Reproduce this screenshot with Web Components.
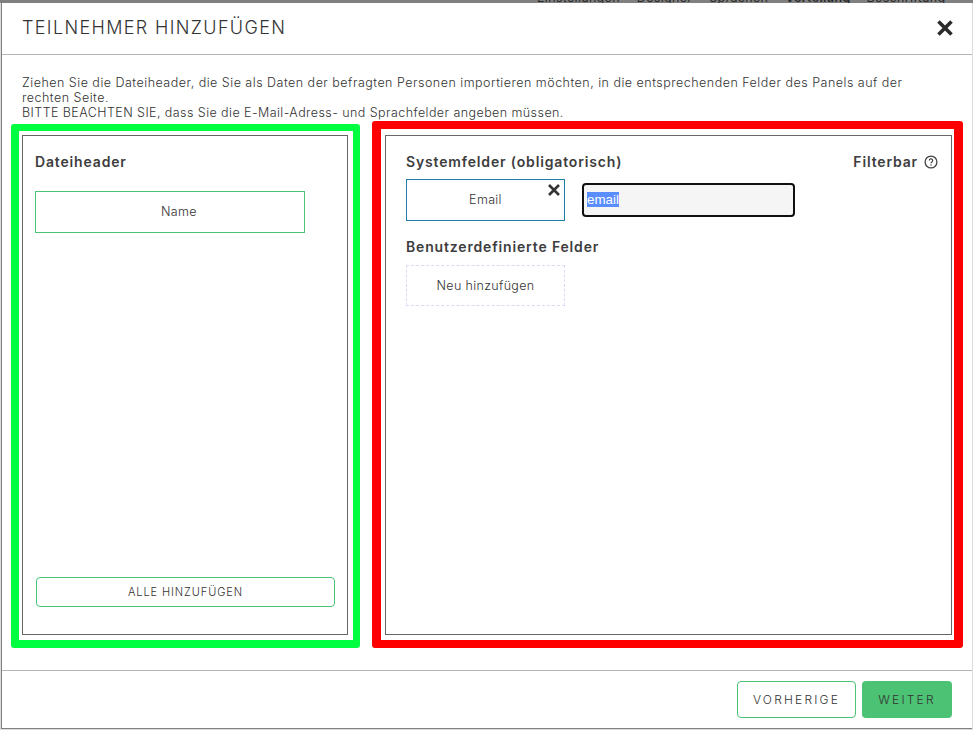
<!DOCTYPE html>
<html lang="de">
<head>
<meta charset="utf-8">
<title>Teilnehmer hinzufügen</title>
<style>
  html, body { margin: 0; height: 100%; }
  body { background: #dcdcdc; font-family: "Inter", "Liberation Sans", sans-serif; color: #3d3d3d; overflow: hidden; }
</style>
</head>
<body>
<template id="backdrop-strip-tpl">
  <style>
    :host { display: block; height: 3px; overflow: hidden; background: #808080; }
    nav { display: flex; margin-top: -10px; padding-left: 537px; font-size: 12.5px; line-height: 15px; letter-spacing: .3px; color: #2a2a2a; white-space: nowrap; }
    span { margin-right: 17px; }
    b { font-weight: 600; margin-right: 16px; }
  </style>
  <nav><span>Einstellungen</span><span>Designer</span><span>Sprachen</span><b>Verteilung</b><span>Beschriftung</span></nav>
</template>
<template id="field-tile-tpl">
  <style>
    :host { display: flex; position: relative; box-sizing: border-box; width: 159px; height: 42px; padding-bottom: 2px; align-items: center; justify-content: center; font-size: 12.5px; font-weight: 300; letter-spacing: .35px; color: #333; border: 1px solid #1f7aa8; }
    :host([variant="source"]) { width: 270px; border-color: #4cc274; padding-left: 18px; }
    :host([variant="add"]) { height: 41px; padding-bottom: 0; border: 1px dashed #ddd8f5; }
    button { position: absolute; top: 3px; right: 3px; width: 14px; height: 14px; padding: 0; border: 0; background: none; }
    svg { display: block; }
  </style>
  <slot></slot>
</template>
<template id="panel-box-tpl">
  <style>
    :host { display: flex; box-sizing: border-box; border: solid #00ff40; border-width: 7px 7px 8px 8px; border-radius: 3px; padding: 4px 5px 5px 3px; }
    :host([tone="red"]) { border-color: #ff0000; border-width: 8px 9px; padding: 6px 2px 5px 4px; }
    .inner { flex: 1; min-width: 0; box-sizing: border-box; border: 1px solid #666; display: flex; flex-direction: column; }
  </style>
  <div class="inner"><slot></slot></div>
</template>
<template id="import-dialog-tpl">
  <style>
    :host { display: flex; flex-direction: column; box-sizing: border-box; height: 726px; margin: 0 1px 0 1px; background: #fff; border: solid #808080; border-width: 0 0 1px 1px; }
    header { height: 52px; flex: none; box-sizing: border-box; border-bottom: 1px solid #b5b5b5; display: flex; align-items: center; justify-content: space-between; padding: 0 18px 2px 20px; }
    h1 { margin: 0; font-size: 18px; font-weight: 300; letter-spacing: 1.35px; color: #333; }
    .body { flex: 1; min-height: 0; display: flex; flex-direction: column; padding: 20px 8px 22px 9px; }
    p { margin: 0 0 0 11px; width: 890px; font-size: 12.5px; font-weight: 300; letter-spacing: .49px; line-height: 15px; color: #333; }
    p span { letter-spacing: .43px; }
    .columns { flex: 1; min-height: 0; display: flex; gap: 12px; align-items: flex-end; }
    panel-box[tone="green"] { width: 349px; height: 524px; }
    panel-box[tone="red"] { width: 591px; height: 527px; }
    .col { flex: 1; display: flex; flex-direction: column; padding: 17px 12px 27px; }
    h2 { margin: 0; font-size: 14px; line-height: 17px; font-weight: 600; color: #3d3d3d; letter-spacing: .84px; }
    .col field-tile { margin-top: 21px; }
    .all { margin-top: auto; height: 30px; border: 1px solid #4cc274; border-radius: 4px; background: #fff; font: inherit; font-weight: 300; font-size: 11px; letter-spacing: .9px; color: #333; margin-left: 1px; }
    .right { flex: 1; padding: 17px 13px 0 20px; }
    .row { display: flex; justify-content: space-between; align-items: center; }
    .filter { display: flex; align-items: center; gap: 6px; }
    .map { display: flex; align-items: center; gap: 17px; margin-top: 9px; }
    .mail { box-sizing: border-box; width: 213px; height: 34px; border: 2px solid #111; border-radius: 4px; background: #f5f5f5; padding: 0 3px 2px; font: 13.33px "Liberation Sans", sans-serif; display: flex; align-items: center; }
    .mail span { background: #5a8dff; color: #fff; }
    h2.sub { margin-top: 17px; margin-bottom: 10px; }
    footer { height: 58px; flex: none; box-sizing: border-box; border-top: 1px solid #b5b5b5; display: flex; justify-content: flex-end; align-items: flex-start; gap: 6px; padding: 10px 20px 0 0; }
    footer button { box-sizing: border-box; height: 37px; border-radius: 4px; font: inherit; font-weight: 300; font-size: 12px; letter-spacing: 2.2px; color: #333; }
    .prev { width: 119px; background: #fff; border: 1px solid #4cc274; }
    .next { width: 90px; background: #4cc274; border: 0; }
  </style>
  <header>
    <h1>TEILNEHMER HINZUFÜGEN</h1>
    <svg width="18" height="18" viewBox="0 0 18 18"><path d="M2.5 2.5 15.5 15.5M15.5 2.5 2.5 15.5" stroke="#2b2b2b" stroke-width="3.6" fill="none"/></svg>
  </header>
  <div class="body">
    <p>Ziehen Sie die Dateiheader, die Sie als Daten der befragten Personen importieren möchten, in die entsprechenden Felder des Panels auf der rechten Seite.<br><span>BITTE BEACHTEN SIE, dass Sie die E-Mail-Adress- und Sprachfelder angeben müssen.</span></p>
    <div class="columns">
      <panel-box tone="green">
        <div class="col">
          <h2>Dateiheader</h2>
          <field-tile variant="source">Name</field-tile>
          <button class="all">ALLE HINZUFÜGEN</button>
        </div>
      </panel-box>
      <panel-box tone="red">
        <div class="right">
          <div class="row">
            <h2>Systemfelder (obligatorisch)</h2>
            <div class="filter"><h2>Filterbar</h2>
              <svg width="14" height="14" viewBox="0 0 14 14" fill="none" stroke="#444"><circle cx="7" cy="7" r="5.9" stroke-width="1.3"/><path d="M5.3 5.6a1.7 1.7 0 1 1 2.5 1.5c-.6.3-.8.6-.8 1.2" stroke-width="1.2"/><circle cx="7" cy="10" r=".75" fill="#444" stroke="none"/></svg>
            </div>
          </div>
          <div class="map">
            <field-tile removable>Email</field-tile>
            <div class="mail"><span>email</span></div>
          </div>
          <h2 class="sub">Benutzerdefinierte Felder</h2>
          <field-tile variant="add">Neu hinzufügen</field-tile>
        </div>
      </panel-box>
    </div>
  </div>
  <footer>
    <button class="prev">VORHERIGE</button>
    <button class="next">WEITER</button>
  </footer>
</template>
<backdrop-strip></backdrop-strip>
<import-dialog></import-dialog>
<script>
class TemplatedElement extends HTMLElement {
  constructor(tplId) {
    super();
    this.root = this.attachShadow({ mode: 'open' });
    this.root.appendChild(document.getElementById(tplId).content.cloneNode(true));
  }
}
class BackdropStrip extends TemplatedElement {
  constructor() { super('backdrop-strip-tpl'); }
}
class FieldTile extends TemplatedElement {
  constructor() { super('field-tile-tpl'); }
  connectedCallback() {
    if (this.hasAttribute('removable') && !this.root.querySelector('button')) {
      const btn = document.createElement('button');
      btn.innerHTML = '<svg width="14" height="14" viewBox="0 0 14 14"><path d="M2 2 12 12M12 2 2 12" stroke="#333" stroke-width="2.6" fill="none"/></svg>';
      this.root.appendChild(btn);
    }
  }
}
class PanelBox extends TemplatedElement {
  constructor() { super('panel-box-tpl'); }
}
class ImportDialog extends TemplatedElement {
  constructor() { super('import-dialog-tpl'); }
}
customElements.define('backdrop-strip', BackdropStrip);
customElements.define('field-tile', FieldTile);
customElements.define('panel-box', PanelBox);
customElements.define('import-dialog', ImportDialog);
</script>
</body>
</html>
